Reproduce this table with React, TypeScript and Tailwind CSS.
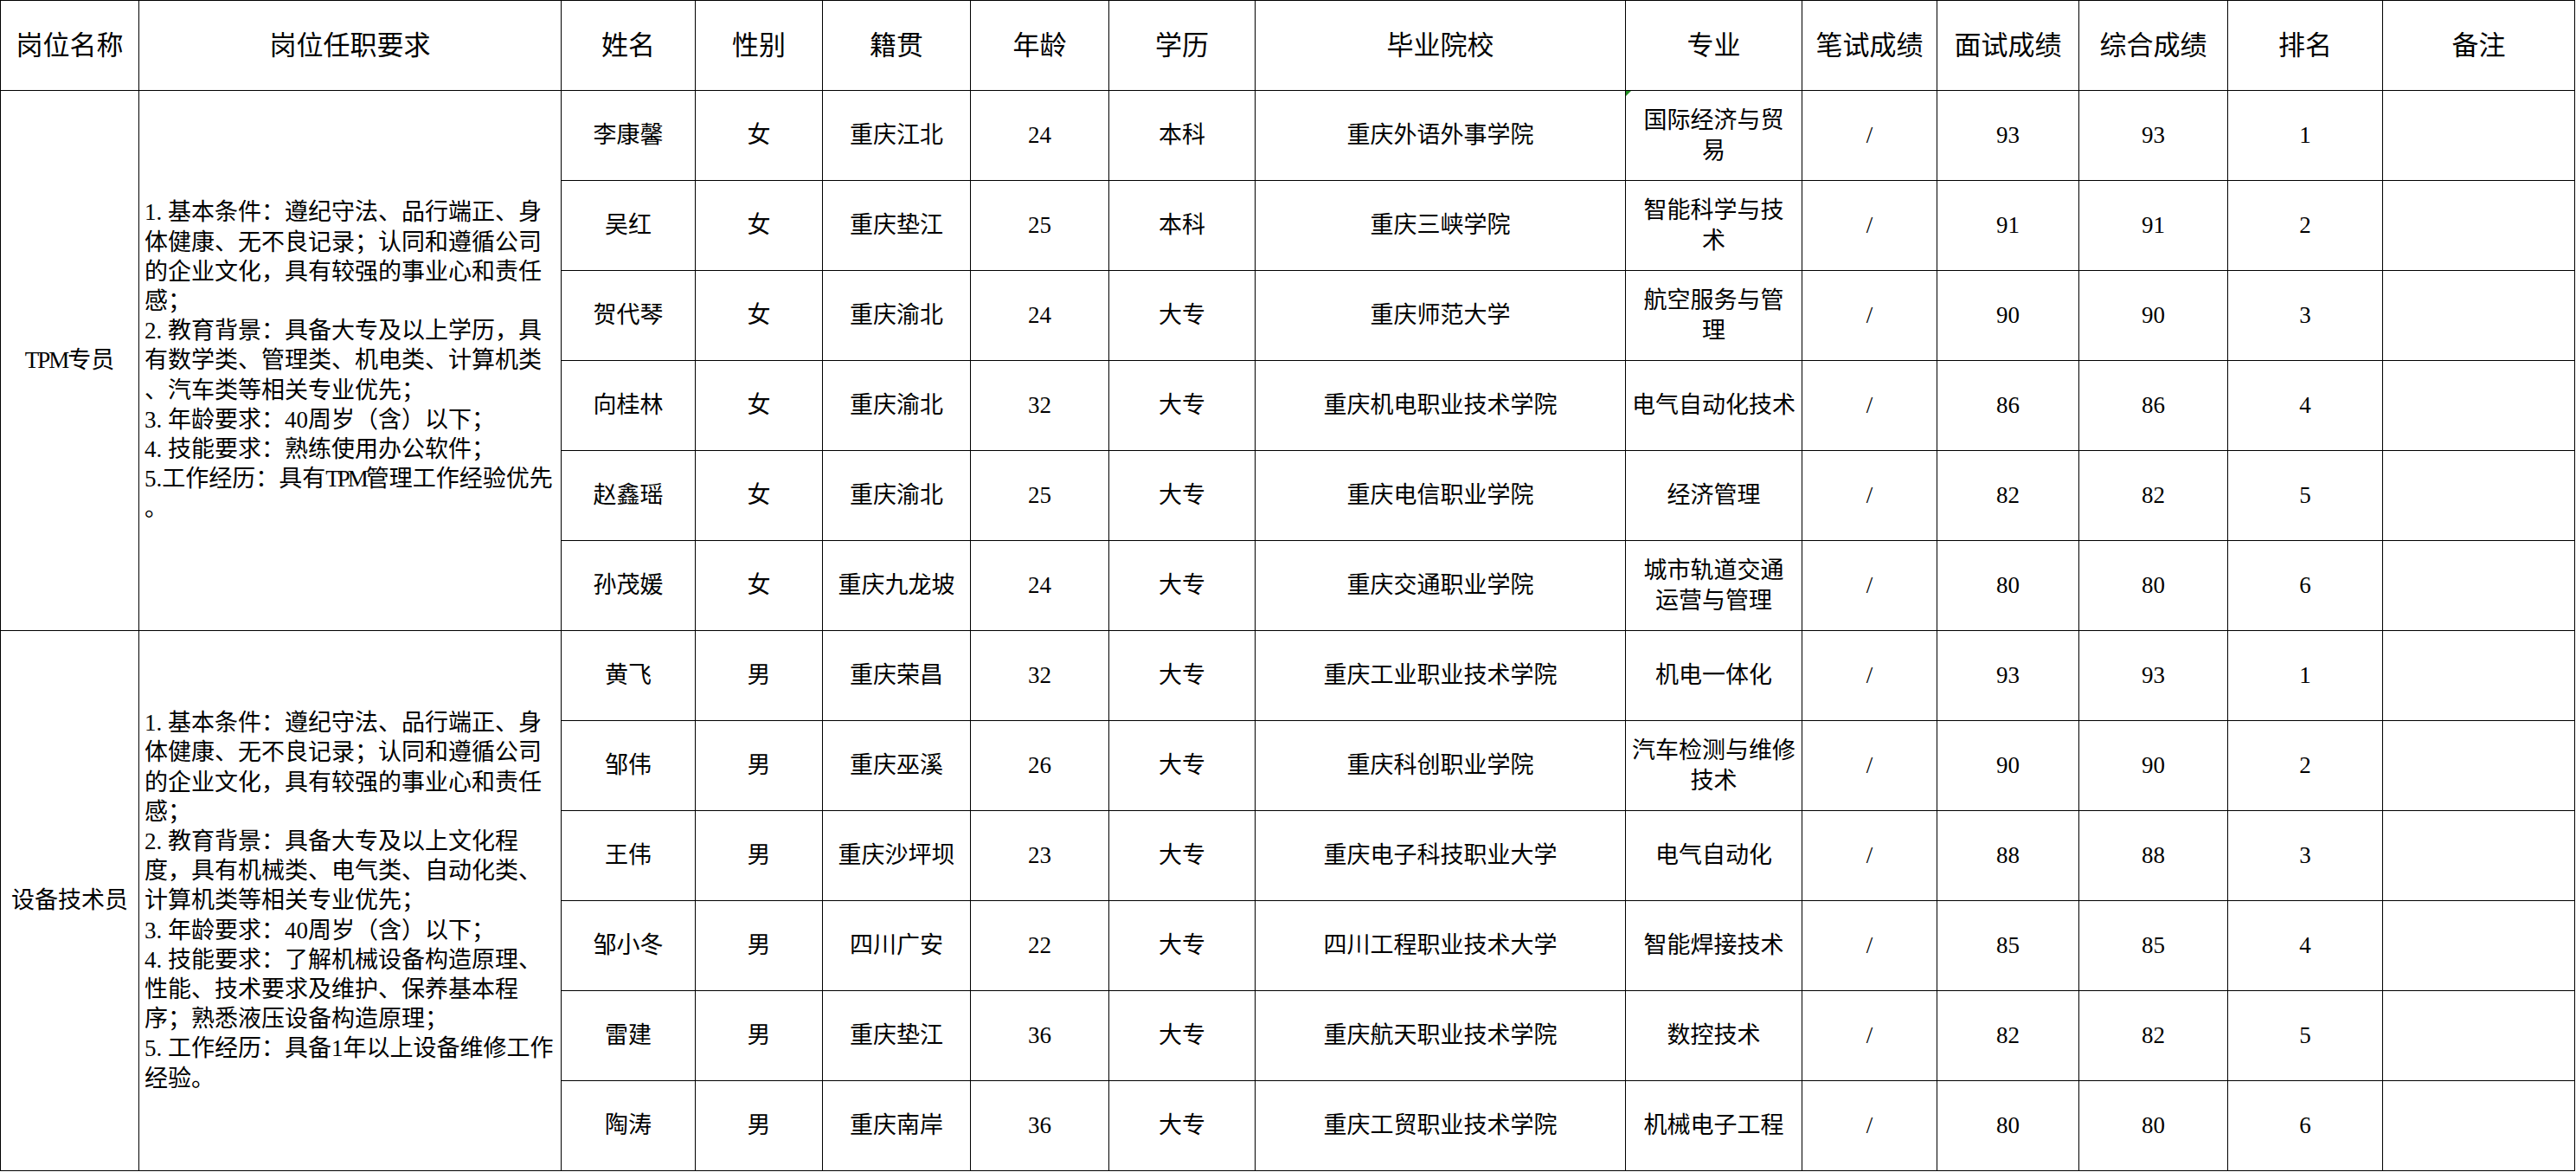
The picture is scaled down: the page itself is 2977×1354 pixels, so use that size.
import React from "react";

type Row = {
  name: string;
  sex: string;
  origin: string;
  age: string;
  edu: string;
  school: string;
  major: string[];
  interview: string;
  total: string;
  rank: string;
};

const group1: Row[] = [
  { name: "李康馨", sex: "女", origin: "重庆江北", age: "24", edu: "本科", school: "重庆外语外事学院", major: ["国际经济与贸", "易"], interview: "93", total: "93", rank: "1" },
  { name: "吴红", sex: "女", origin: "重庆垫江", age: "25", edu: "本科", school: "重庆三峡学院", major: ["智能科学与技", "术"], interview: "91", total: "91", rank: "2" },
  { name: "贺代琴", sex: "女", origin: "重庆渝北", age: "24", edu: "大专", school: "重庆师范大学", major: ["航空服务与管", "理"], interview: "90", total: "90", rank: "3" },
  { name: "向桂林", sex: "女", origin: "重庆渝北", age: "32", edu: "大专", school: "重庆机电职业技术学院", major: ["电气自动化技术"], interview: "86", total: "86", rank: "4" },
  { name: "赵鑫瑶", sex: "女", origin: "重庆渝北", age: "25", edu: "大专", school: "重庆电信职业学院", major: ["经济管理"], interview: "82", total: "82", rank: "5" },
  { name: "孙茂媛", sex: "女", origin: "重庆九龙坡", age: "24", edu: "大专", school: "重庆交通职业学院", major: ["城市轨道交通", "运营与管理"], interview: "80", total: "80", rank: "6" },
];

const group2: Row[] = [
  { name: "黄飞", sex: "男", origin: "重庆荣昌", age: "32", edu: "大专", school: "重庆工业职业技术学院", major: ["机电一体化"], interview: "93", total: "93", rank: "1" },
  { name: "邹伟", sex: "男", origin: "重庆巫溪", age: "26", edu: "大专", school: "重庆科创职业学院", major: ["汽车检测与维修", "技术"], interview: "90", total: "90", rank: "2" },
  { name: "王伟", sex: "男", origin: "重庆沙坪坝", age: "23", edu: "大专", school: "重庆电子科技职业大学", major: ["电气自动化"], interview: "88", total: "88", rank: "3" },
  { name: "邹小冬", sex: "男", origin: "四川广安", age: "22", edu: "大专", school: "四川工程职业技术大学", major: ["智能焊接技术"], interview: "85", total: "85", rank: "4" },
  { name: "雷建", sex: "男", origin: "重庆垫江", age: "36", edu: "大专", school: "重庆航天职业技术学院", major: ["数控技术"], interview: "82", total: "82", rank: "5" },
  { name: "陶涛", sex: "男", origin: "重庆南岸", age: "36", edu: "大专", school: "重庆工贸职业技术学院", major: ["机械电子工程"], interview: "80", total: "80", rank: "6" },
];

const req1: React.ReactNode[] = [
  "1. 基本条件：遵纪守法、品行端正、身",
  "体健康、无不良记录；认同和遵循公司",
  "的企业文化，具有较强的事业心和责任",
  "感；",
  "2. 教育背景：具备大专及以上学历，具",
  "有数学类、管理类、机电类、计算机类",
  "、汽车类等相关专业优先；",
  "3. 年龄要求：40周岁（含）以下；",
  "4. 技能要求：熟练使用办公软件；",
  <>
    5.工作经历：具有<span className="tracking-[-3px]">TPM</span>管理工作经验优先
  </>,
  "。",
];

const req2: React.ReactNode[] = [
  "1. 基本条件：遵纪守法、品行端正、身",
  "体健康、无不良记录；认同和遵循公司",
  "的企业文化，具有较强的事业心和责任",
  "感；",
  "2. 教育背景：具备大专及以上文化程",
  "度，具有机械类、电气类、自动化类、",
  "计算机类等相关专业优先；",
  "3. 年龄要求：40周岁（含）以下；",
  "4. 技能要求：了解机械设备构造原理、",
  "性能、技术要求及维护、保养基本程",
  "序；熟悉液压设备构造原理；",
  "5. 工作经历：具备1年以上设备维修工作",
  "经验。",
];

const headers = [
  "岗位名称",
  "岗位任职要求",
  "姓名",
  "性别",
  "籍贯",
  "年龄",
  "学历",
  "毕业院校",
  "专业",
  "笔试成绩",
  "面试成绩",
  "综合成绩",
  "排名",
  "备注",
];

const cell =
  "border-r border-b border-black flex items-center justify-center text-center text-[27px] leading-[35px] whitespace-nowrap";

function PersonCells({ r, mark }: { r: Row; mark?: boolean }) {
  return (
    <>
      <div className={cell}>{r.name}</div>
      <div className={cell}>{r.sex}</div>
      <div className={cell}>{r.origin}</div>
      <div className={cell}>{r.age}</div>
      <div className={cell}>{r.edu}</div>
      <div className={cell}>{r.school}</div>
      <div className={cell + " relative flex-col"}>
        {mark && (
          <span className="absolute left-0 top-0 h-0 w-0 border-t-[6px] border-r-[6px] border-t-[#1f8f1f] border-r-transparent" />
        )}
        {r.major.map((m, i) => (
          <div key={i}>{m}</div>
        ))}
      </div>
      <div className={cell}>/</div>
      <div className={cell}>{r.interview}</div>
      <div className={cell}>{r.total}</div>
      <div className={cell}>{r.rank}</div>
      <div className={cell}></div>
    </>
  );
}

function Group({ title, req, rows }: { title: string; req: React.ReactNode[]; rows: Row[] }) {
  return (
    <>
      <div className={cell + " row-span-6"}>
        {title === "TPM专员" ? (
          <span>
            <span className="tracking-[-2px]">TPM</span>专员
          </span>
        ) : (
          title
        )}
      </div>
      <div className="row-span-6 border-r border-b border-black flex flex-col justify-center pl-[6px] text-[27px] leading-[34.2px] whitespace-nowrap text-left overflow-hidden">
        {req.map((l, i) => (
          <div key={i}>{l}</div>
        ))}
      </div>
      {rows.map((r, i) => (
        <PersonCells key={i} r={r} mark={title === "TPM专员" && i === 0} />
      ))}
    </>
  );
}

export default function App() {
  return (
    <div className="w-[2977px] h-[1354px] bg-white overflow-hidden text-black font-['Liberation_Serif','Noto_Sans_CJK_SC',serif]">
      <div className="grid w-max grid-cols-[160px_488px_155px_147px_171px_160px_169px_428px_204px_156px_164px_172px_179px_222px] auto-rows-[104px] border-l border-t border-black">
        {headers.map((h) => (
          <div key={h} className={cell + " text-[31px]"}>
            {h}
          </div>
        ))}
        <Group title="TPM专员" req={req1} rows={group1} />
        <Group title="设备技术员" req={req2} rows={group2} />
      </div>
    </div>
  );
}
